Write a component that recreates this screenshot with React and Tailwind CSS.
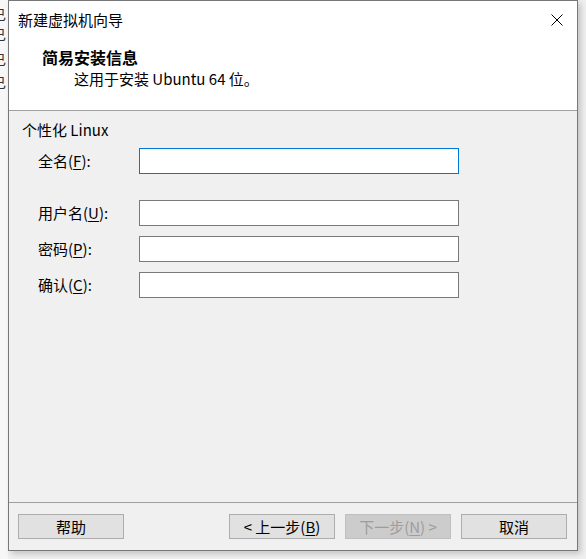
import React from "react";

const font = { fontFamily: '"Noto Sans CJK SC", "Noto Sans", sans-serif' };

function Label({ text, k }) {
  return (
    <span className="w-[101px] shrink-0 text-[15px] leading-[20px] text-black">
      {text}(<u className="underline-offset-2">{k}</u>):
    </span>
  );
}

function Row({ text, k, focus, className }) {
  return (
    <div className={"flex items-center " + (className || "")}>
      <Label text={text} k={k} />
      <div
        className={
          "w-[320px] h-[26px] bg-white border " +
          (focus ? "border-[#0078d7]" : "border-[#7a7a7a]")
        }
      />
    </div>
  );
}

function Btn({ children, disabled, className }) {
  return (
    <div
      className={
        "w-[106px] h-[25px] flex items-center justify-center border text-[15px] leading-[20px] " +
        (disabled
          ? "bg-[#cccccc] border-[#bfbfbf] text-[#9d9d9d]"
          : "bg-[#e1e1e1] border-[#adadad] text-black") +
        " " +
        (className || "")
      }
    >
      {children}
    </div>
  );
}

export default function App() {
  return (
    <div
      className="w-[586px] h-[559px] bg-[#f0f0f0] flex overflow-hidden"
      style={font}
    >
      <div className="w-[8px] shrink-0 overflow-hidden bg-[#f7f7f7]">
        <div className="ml-[-8px] flex flex-col text-[14px] leading-[16px] text-[#333]">
          <span className="mt-[6px]">已</span>
          <span className="mt-[4px]">已</span>
          <span className="mt-[9px]">已</span>
          <span className="mt-[7px]">已</span>
        </div>
      </div>
      <div className="w-[570px] h-[551px] shrink-0 border border-[#777777] bg-[#f0f0f0] flex flex-col shadow-[3px_3px_6px_rgba(0,0,0,0.18)]">
        <div className="bg-white flex flex-col">
          <div className="h-[37px] flex items-center justify-between pl-[9px] pr-[14px]">
            <span className="text-[15px] leading-[20px] text-black">新建虚拟机向导</span>
            <svg width="12" height="12" viewBox="0 0 12 12" className="block">
              <path d="M0.5 0.5 L11.5 11.5 M11.5 0.5 L0.5 11.5" stroke="#000" strokeWidth="1" fill="none" />
            </svg>
          </div>
          <div className="pt-[9px] pb-[21px] flex flex-col">
            <span className="pl-[33px] text-[16px] leading-[20px] font-bold text-black">简易安装信息</span>
            <span className="pl-[65px] mt-[2px] text-[15px] leading-[20px] text-black">这用于安装 Ubuntu 64 位。</span>
          </div>
        </div>
        <div className="h-px bg-[#a0a0a0]" />
        <div className="flex-1 flex flex-col pt-[9px] pl-[13px]">
          <span className="text-[15px] leading-[20px] text-black">个性化 Linux</span>
          <div className="pl-[16px] flex flex-col">
            <Row text="全名" k="F" focus className="mt-[8px]" />
            <Row text="用户名" k="U" className="mt-[26px]" />
            <Row text="密码" k="P" className="mt-[10px]" />
            <Row text="确认" k="C" className="mt-[10px]" />
          </div>
        </div>
        <div className="h-px bg-[#a0a0a0]" />
        <div className="h-[47px] flex pt-[11px] pl-[9px] pr-[10px]">
          <Btn>帮助</Btn>
          <div className="flex-1" />
          <Btn>
            &lt;&nbsp;上一步(<u className="underline-offset-2">B</u>)
          </Btn>
          <Btn disabled className="ml-[10px]">
            下一步(<u className="underline-offset-2">N</u>)&nbsp;&gt;
          </Btn>
          <Btn className="ml-[10px]">取消</Btn>
        </div>
      </div>
    </div>
  );
}
